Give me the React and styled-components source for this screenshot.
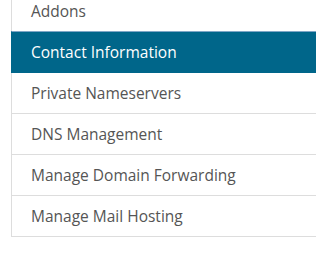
import React from 'react';
import styled, { createGlobalStyle } from 'styled-components';

const GlobalStyle = createGlobalStyle`
  html, body {
    margin: 0;
    padding: 0;
    background: #ffffff;
    overflow: hidden;
  }
  body {
    font-family: "Open Sans", "Liberation Sans", Arial, sans-serif;
  }
`;

const Page = styled.div`
  width: 316px;
  height: 273px;
  padding-left: 11px;
  box-sizing: border-box;
  overflow: hidden;
`;

const List = styled.ul`
  list-style: none;
  margin: -10px -40px 0 0;
  padding: 0;
`;

const Item = styled.li`
  display: block;
  height: 42px;
  box-sizing: border-box;
  padding: 10px 19px;
  margin-bottom: -1px;
  border: 1px solid #dddddd;
  background: ${(p) => (p.$active ? '#00668a' : '#ffffff')};
  border-color: ${(p) => (p.$active ? '#00668a' : '#dddddd')};
  border-top-color: ${(p) => (p.$active ? '#7fa6c6' : '#dddddd')};
  color: ${(p) => (p.$active ? '#ffffff' : '#555555')};
  font-size: 15.5px;
  line-height: 20px;
  white-space: nowrap;
  position: relative;
  z-index: ${(p) => (p.$active ? 2 : 1)};
`;

const items = [
  'Addons',
  'Contact Information',
  'Private Nameservers',
  'DNS Management',
  'Manage Domain Forwarding',
  'Manage Mail Hosting',
];

export default function App() {
  return (
    <>
      <GlobalStyle />
      <Page>
        <List>
          {items.map((label) => (
            <Item key={label} $active={label === 'Contact Information'}>
              {label}
            </Item>
          ))}
        </List>
      </Page>
    </>
  );
}
